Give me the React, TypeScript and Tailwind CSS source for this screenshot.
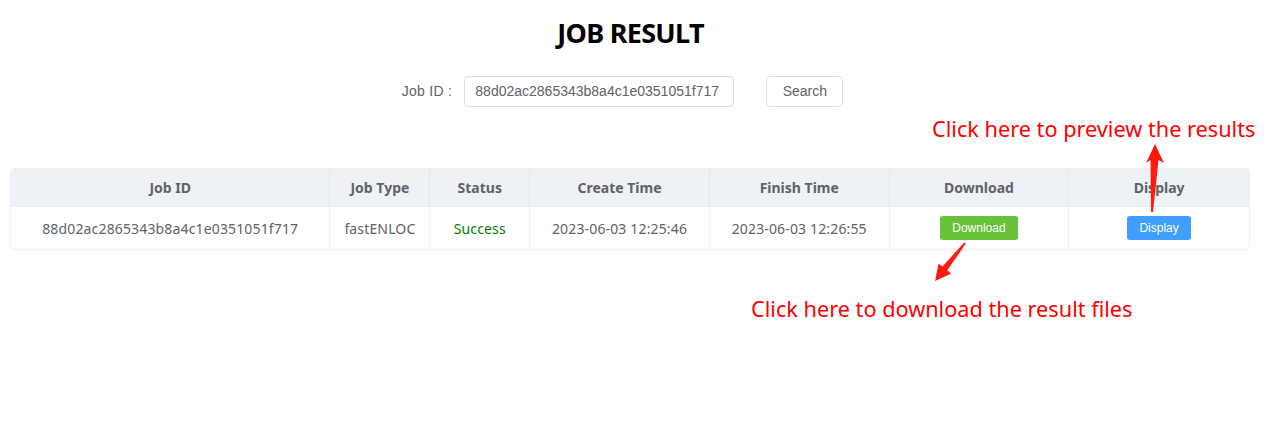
import React from "react";

const cols = [
  { title: "Job ID", w: "w-[320px]" },
  { title: "Job Type", w: "w-[100px]" },
  { title: "Status", w: "w-[100px]" },
  { title: "Create Time", w: "w-[180px]" },
  { title: "Finish Time", w: "w-[180px]" },
  { title: "Download", w: "w-[180px]" },
  { title: "Display", w: "w-[180px]" },
];

export default function App() {
  const yahei = { fontFamily: '"Noto Sans", "Open Sans", sans-serif' };
  return (
    <div className="relative w-[1275px] h-[428px] bg-white overflow-hidden" style={yahei}>
      <h1 className="pt-[15px] pr-[14px] text-center text-[27px] leading-[36px] font-bold text-black tracking-[-0.7px]">
        JOB RESULT
      </h1>

      <div className="mt-[25px] flex justify-center items-center pr-[30px] font-['Liberation_Sans',Arial,sans-serif]">
        <span className="text-[14px] text-[#606266] mr-[12px] tracking-[0.3px]">Job ID :</span>
        <div className="w-[270px] h-[31px] border border-[#dcdfe6] rounded-[4px] flex items-center px-[10px] text-[14px] text-[#606266]">
          88d02ac2865343b8a4c1e0351051f717
        </div>
        <button className="ml-[32px] w-[77px] h-[31px] border border-[#dcdfe6] rounded-[4px] text-[14px] text-[#606266] bg-white">
          Search
        </button>
      </div>

      <div className="mt-[61px] mx-[10px] w-[1240px] border border-[#ebeef5] rounded-[4px] overflow-hidden">
        <div className="flex bg-[#eef1f6] border-b border-[#ebeef5]">
          {cols.map((c, i) => (
            <div
              key={c.title}
              className={`${c.w} h-[37px] flex items-center justify-center text-[14px] font-bold text-[#606266] ${i < cols.length - 1 ? "border-r border-[#e4e7ed]" : ""}`}
            >
              {c.title}
            </div>
          ))}
        </div>
        <div className="flex text-[14px] text-[#606266] tracking-[0.15px]">
          <div className="w-[320px] h-[42px] flex items-center justify-center border-r border-[#ebeef5]">
            88d02ac2865343b8a4c1e0351051f717
          </div>
          <div className="w-[100px] h-[42px] flex items-center justify-center border-r border-[#ebeef5]">
            fastENLOC
          </div>
          <div className="w-[100px] h-[42px] flex items-center justify-center border-r border-[#ebeef5] text-[#008000]">
            Success
          </div>
          <div className="w-[180px] h-[42px] flex items-center justify-center border-r border-[#ebeef5]">
            2023-06-03 12:25:46
          </div>
          <div className="w-[180px] h-[42px] flex items-center justify-center border-r border-[#ebeef5]">
            2023-06-03 12:26:55
          </div>
          <div className="w-[180px] h-[42px] flex items-center justify-center border-r border-[#ebeef5]">
            <button className="w-[78px] h-[24px] rounded-[3px] bg-[#67c23a] text-white text-[12px] tracking-normal font-['Liberation_Sans',Arial,sans-serif]">
              Download
            </button>
          </div>
          <div className="w-[180px] h-[42px] flex items-center justify-center">
            <button className="w-[64px] h-[24px] rounded-[3px] bg-[#409eff] text-white text-[12px] tracking-normal font-['Liberation_Sans',Arial,sans-serif]">
              Display
            </button>
          </div>
        </div>
      </div>

      <div className="absolute left-[932px] top-[114px] text-[21.7px] leading-[30px] text-[#ff0000] whitespace-nowrap">
        Click here to preview the results
      </div>
      <div className="absolute left-[751px] top-[294px] text-[21.7px] leading-[30px] text-[#ff0000] whitespace-nowrap">
        Click here to download the result files
      </div>

      <svg className="absolute left-0 top-0 pointer-events-none" width="1275" height="428">
        <polygon
          fill="#ff1a0f"
          points="1151,212 1150.5,160 1146,163 1155,144 1164,163 1158.5,160 1153,212"
        />
        <polygon
          fill="#ff1a0f"
          points="964.2,242.4 942.5,266.5 938.6,263.4 935,281 951.2,273.4 947.3,270.3 965.8,243.6"
        />
      </svg>
    </div>
  );
}
